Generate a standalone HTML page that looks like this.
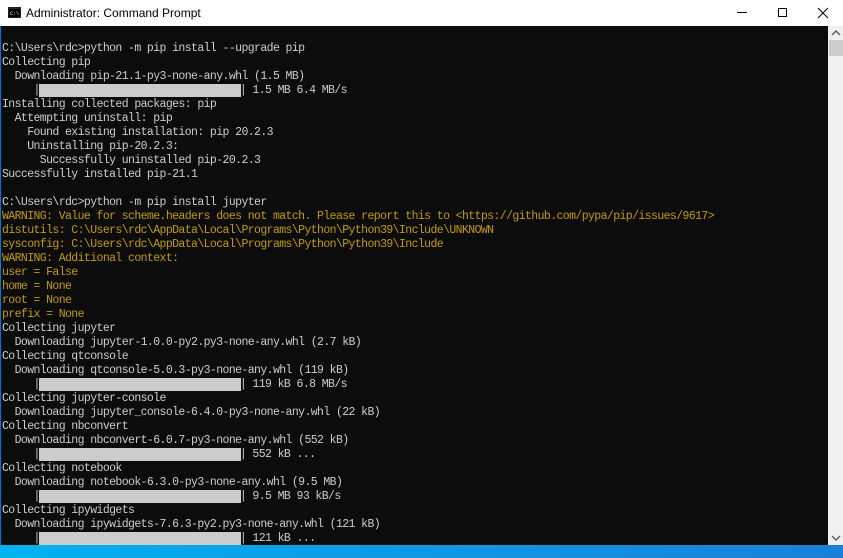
<!DOCTYPE html>
<html><head><style>
body{margin:0;width:843px;height:558px;overflow:hidden;background:#fff;font-family:"Liberation Sans",sans-serif;position:relative}
.title{position:absolute;left:0;top:0;width:843px;height:26px;background:#fff}
.title .t{position:absolute;left:26px;top:6px;font-size:12px;color:#000}
.con{position:absolute;left:0;top:26px;width:828px;height:519px;background:#0c0c0c;overflow:hidden;border-left:1px solid #0078d7;box-sizing:border-box}
pre{margin:0;padding:16px 0 0 1px;font-family:"Liberation Mono",monospace;font-size:11.5px;letter-spacing:-0.6px;line-height:14px;color:#cccccc}
pre div{height:14px;white-space:pre}
.y{color:#c19c00}
.b{display:inline-block;width:202px;height:13px;background:#cccccc;vertical-align:top;position:relative;top:0px;margin:0 -1px}
.sb{position:absolute;left:828px;top:26px;width:15px;height:519px;background:#f0f0f0}
.th{position:absolute;left:829px;top:40px;width:14px;height:16px;background:#cdcdcd}
.bot{position:absolute;left:0;top:545px;width:843px;height:13px;background:linear-gradient(90deg,#00b2f0,#1a80d8)}
</style></head><body>
<div class="title">
<svg style="position:absolute;left:8px;top:7px" width="13" height="11"><rect x="0" y="0" width="13" height="11" fill="#222"/><rect x="1" y="2" width="11" height="8" fill="#000"/><text x="2" y="8" font-size="5" fill="#fff" font-family="Liberation Mono">C:\</text></svg>
<div class="t">Administrator: Command Prompt</div>
<svg style="position:absolute;left:735px;top:6px" width="100" height="14">
<line x1="2" y1="6.5" x2="12" y2="6.5" stroke="#000" stroke-width="1"/>
<rect x="43.5" y="2.5" width="8" height="8" fill="none" stroke="#000"/>
<line x1="83" y1="2" x2="93" y2="12" stroke="#000"/><line x1="93" y1="2" x2="83" y2="12" stroke="#000"/>
</svg>
</div>
<div class="con"><pre><div>C:\Users\rdc&gt;python -m pip install --upgrade pip</div><div>Collecting pip</div><div>  Downloading pip-21.1-py3-none-any.whl (1.5 MB)</div><div>     |<span class="b"></span>| 1.5 MB 6.4 MB/s</div><div>Installing collected packages: pip</div><div>  Attempting uninstall: pip</div><div>    Found existing installation: pip 20.2.3</div><div>    Uninstalling pip-20.2.3:</div><div>      Successfully uninstalled pip-20.2.3</div><div>Successfully installed pip-21.1</div><div></div><div>C:\Users\rdc&gt;python -m pip install jupyter</div><div class="y">WARNING: Value for scheme.headers does not match. Please report this to &lt;https://github.com/pypa/pip/issues/9617&gt;</div><div class="y">distutils: C:\Users\rdc\AppData\Local\Programs\Python\Python39\Include\UNKNOWN</div><div class="y">sysconfig: C:\Users\rdc\AppData\Local\Programs\Python\Python39\Include</div><div class="y">WARNING: Additional context:</div><div class="y">user = False</div><div class="y">home = None</div><div class="y">root = None</div><div class="y">prefix = None</div><div>Collecting jupyter</div><div>  Downloading jupyter-1.0.0-py2.py3-none-any.whl (2.7 kB)</div><div>Collecting qtconsole</div><div>  Downloading qtconsole-5.0.3-py3-none-any.whl (119 kB)</div><div>     |<span class="b"></span>| 119 kB 6.8 MB/s</div><div>Collecting jupyter-console</div><div>  Downloading jupyter_console-6.4.0-py3-none-any.whl (22 kB)</div><div>Collecting nbconvert</div><div>  Downloading nbconvert-6.0.7-py3-none-any.whl (552 kB)</div><div>     |<span class="b"></span>| 552 kB ...</div><div>Collecting notebook</div><div>  Downloading notebook-6.3.0-py3-none-any.whl (9.5 MB)</div><div>     |<span class="b"></span>| 9.5 MB 93 kB/s</div><div>Collecting ipywidgets</div><div>  Downloading ipywidgets-7.6.3-py2.py3-none-any.whl (121 kB)</div><div>     |<span class="b"></span>| 121 kB ...</div></pre></div>
<div class="sb"></div>
<div class="th"></div>
<svg style="position:absolute;left:829px;top:28px" width="14" height="10"><polyline points="3,7 7,3 11,7" fill="none" stroke="#606060" stroke-width="1.5"/></svg>
<svg style="position:absolute;left:829px;top:533px" width="14" height="10"><polyline points="3,3 7,7 11,3" fill="none" stroke="#606060" stroke-width="1.5"/></svg>
<div class="bot"></div>
</body></html>
